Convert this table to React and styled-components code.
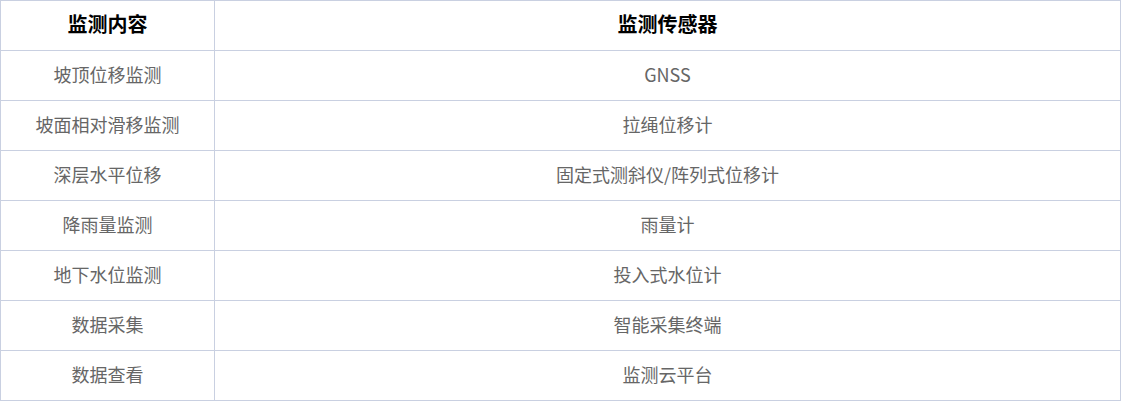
import React from 'react'
import styled, { createGlobalStyle } from 'styled-components'

const rows = [
  ['坡顶位移监测', 'GNSS'],
  ['坡面相对滑移监测', '拉绳位移计'],
  ['深层水平位移', '固定式测斜仪/阵列式位移计'],
  ['降雨量监测', '雨量计'],
  ['地下水位监测', '投入式水位计'],
  ['数据采集', '智能采集终端'],
  ['数据查看', '监测云平台'],
]

const GlobalStyle = createGlobalStyle`
  body {
    margin: 0;
    background: #fff;
    font-family: "Noto Sans CJK SC", "Noto Sans", sans-serif;
  }
`

const Table = styled.table`
  width: 1121px;
  border-collapse: collapse;
  table-layout: fixed;
`

const Cell = styled.td`
  height: 46px;
  padding: 0 0 3px;
  border: 1px solid #c9d0e1;
  text-align: center;
  vertical-align: middle;
  font-size: 18px;
  color: #666;
  line-height: 1;
`

const HeadCell = styled(Cell).attrs({ as: 'th' })`
  font-size: 20px;
  font-weight: bold;
  color: #000;
`

export default function App() {
  return (
    <>
      <GlobalStyle />
      <Table>
        <colgroup>
          <col style={{ width: 214 }} />
          <col />
        </colgroup>
        <thead>
          <tr>
            <HeadCell>监测内容</HeadCell>
            <HeadCell>监测传感器</HeadCell>
          </tr>
        </thead>
        <tbody>
          {rows.map(([item, sensor]) => (
            <tr key={item}>
              <Cell>{item}</Cell>
              <Cell>{sensor}</Cell>
            </tr>
          ))}
        </tbody>
      </Table>
    </>
  )
}
